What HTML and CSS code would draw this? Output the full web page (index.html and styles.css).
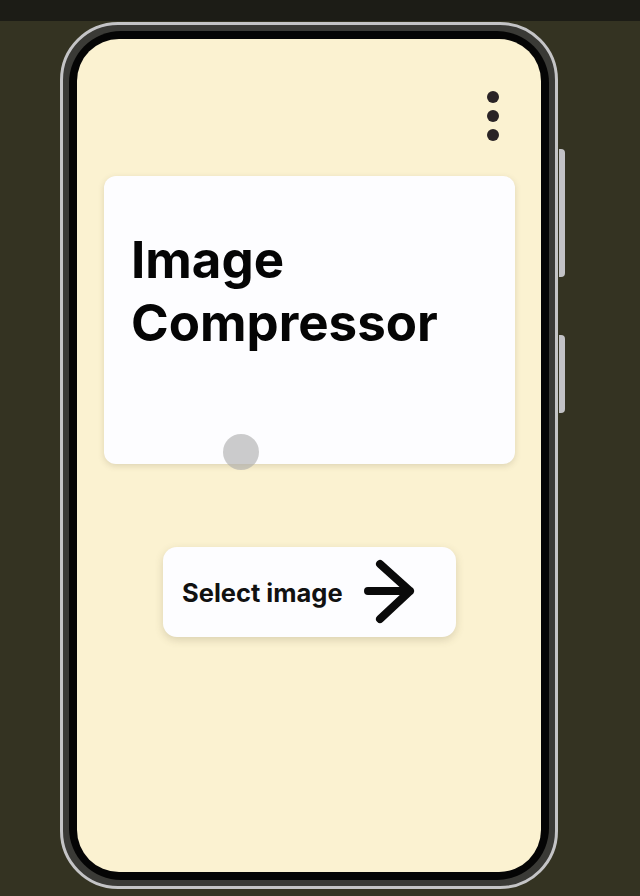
FILE: index.html
```html
<!DOCTYPE html>
<html lang="en">
  <head>
    <meta charset="UTF-8" />
    <meta name="viewport" content="width=device-width, initial-scale=1.0" />
    <title>Image Compressor</title>
    <link rel="stylesheet" href="styles.css">
  </head>
  <body>
    <div class="topbar"></div>
    <div class="stage">
      <div class="phone">
        <span class="side-btn one"></span>
        <span class="side-btn two"></span>
        <div class="bezel">
          <div class="screen">
            <div class="menu">
              <span class="dot"></span>
              <span class="dot"></span>
              <span class="dot"></span>
            </div>
            <div class="card">
              <h1 class="title">Image<br />Compressor</h1>
              <span class="touch"></span>
            </div>
            <div class="actions">
              <button class="select-btn">
                <span>Select image</span>
                <svg class="arrow" width="52" height="70" viewBox="0 0 52 70">
                  <path d="M4 32 H46 M16 5 L46 32 L16 60" fill="none" stroke="#0a0a0a" stroke-width="8" stroke-linecap="round" stroke-linejoin="round" />
                </svg>
              </button>
            </div>
          </div>
        </div>
      </div>
    </div>
  </body>
</html>
```

FILE: styles.css
```css
body {
  margin: 0;
  background-color: #343322;
  font-family: Inter, "Liberation Sans", sans-serif;
  height: 896px;
  overflow: hidden;
}
.topbar {
  height: 21px;
  background-color: #1c1c16;
}
.stage {
  padding: 1px 0 0 60px;
}
.phone {
  position: relative;
  width: 492px;
  height: 861px;
  border: 3px solid #c4c4c6;
  border-radius: 58px;
  background-color: #3a3a36;
  padding: 0;
}
.side-btn {
  position: absolute;
  right: -10px;
  width: 6px;
  background-color: #c2c2c6;
  border-radius: 0 4px 4px 0;
}
.side-btn.one {
  top: 124px;
  height: 128px;
}
.side-btn.two {
  top: 310px;
  height: 78px;
}
.bezel {
  margin: 6px;
  height: 849px;
  background-color: #050505;
  border-radius: 52px;
  padding: 8px;
  box-sizing: border-box;
}
.screen {
  height: 100%;
  background-color: #fbf2d1;
  border-radius: 42px;
  box-sizing: border-box;
  padding: 52px 26px 0 27px;
}
.menu {
  display: flex;
  flex-direction: column;
  align-items: flex-end;
  gap: 7px;
  padding-right: 16px;
}
.dot {
  width: 12px;
  height: 12px;
  border-radius: 50%;
  background-color: #2a2426;
}
.card {
  position: relative;
  margin-top: 35px;
  height: 288px;
  background-color: #fdfdff;
  border-radius: 12px;
  box-shadow: 0 2px 6px rgba(90, 80, 50, 0.18);
  padding: 52px 27px 0;
  box-sizing: border-box;
}
.title {
  margin: 0;
  font-size: 51px;
  line-height: 63px;
  font-weight: 700;
  color: #050505;
  letter-spacing: 0;
}
.touch {
  position: absolute;
  left: 119px;
  top: 258px;
  width: 36px;
  height: 36px;
  border-radius: 50%;
  background-color: rgba(170, 170, 170, 0.6);
}
.actions {
  display: flex;
  justify-content: center;
  margin-top: 83px;
}
.select-btn {
  display: flex;
  align-items: center;
  gap: 21px;
  width: 293px;
  height: 90px;
  padding: 0 0 0 19px;
  border: none;
  border-radius: 14px;
  background-color: #fdfdff;
  box-shadow: 0 3px 8px rgba(90, 80, 50, 0.2);
  font-family: Inter, "Liberation Sans", sans-serif;
  font-size: 25.5px;
  font-weight: 700;
  color: #111;
}
.arrow {
  margin-top: 4px;
}
```
